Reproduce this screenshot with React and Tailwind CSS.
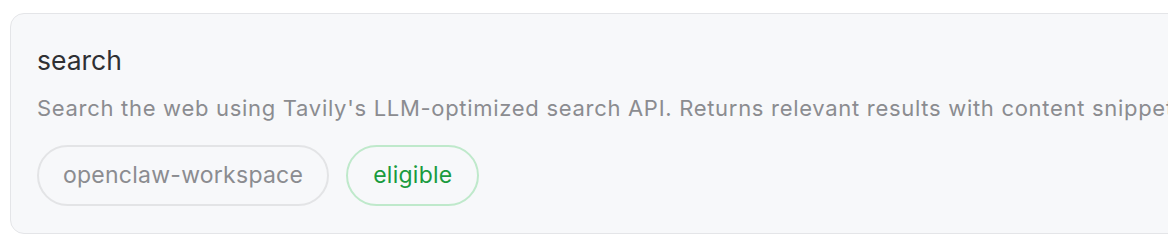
export default function App() {
  return (
    <div className="w-[1168px] h-[244px] overflow-hidden bg-white" style={{ fontFamily: 'Inter, "Noto Sans", sans-serif' }}>
      <div className="ml-[10px] mt-[13px] w-[1220px] h-[221px] rounded-[14px] border border-[#e4e5e8] bg-[#f7f8fa] pl-[26px] pt-[28px]">
        <h2 className="text-[26.5px] leading-[36px] text-[#2f3033]">search</h2>
        <p className="mt-[15px] whitespace-nowrap text-[22px] leading-[30px] tracking-[0.7px] text-[#8b8c90]">
          Search the web using Tavily&apos;s LLM-optimized search API. Returns relevant results with content snippets, scores, and metadata.
        </p>
        <div className="mt-[22px] flex gap-[17px]">
          <span className="flex h-[61px] items-center rounded-full border-2 border-[#e3e4e6] px-[24px] text-[23px] tracking-[0.25px] text-[#8b8c90]">
            openclaw-workspace
          </span>
          <span className="flex h-[61px] items-center rounded-full border-2 border-[#bfe9cb] px-[25px] text-[23px] tracking-[0.25px] text-[#1a9b3e]">
            eligible
          </span>
        </div>
      </div>
    </div>
  )
}
